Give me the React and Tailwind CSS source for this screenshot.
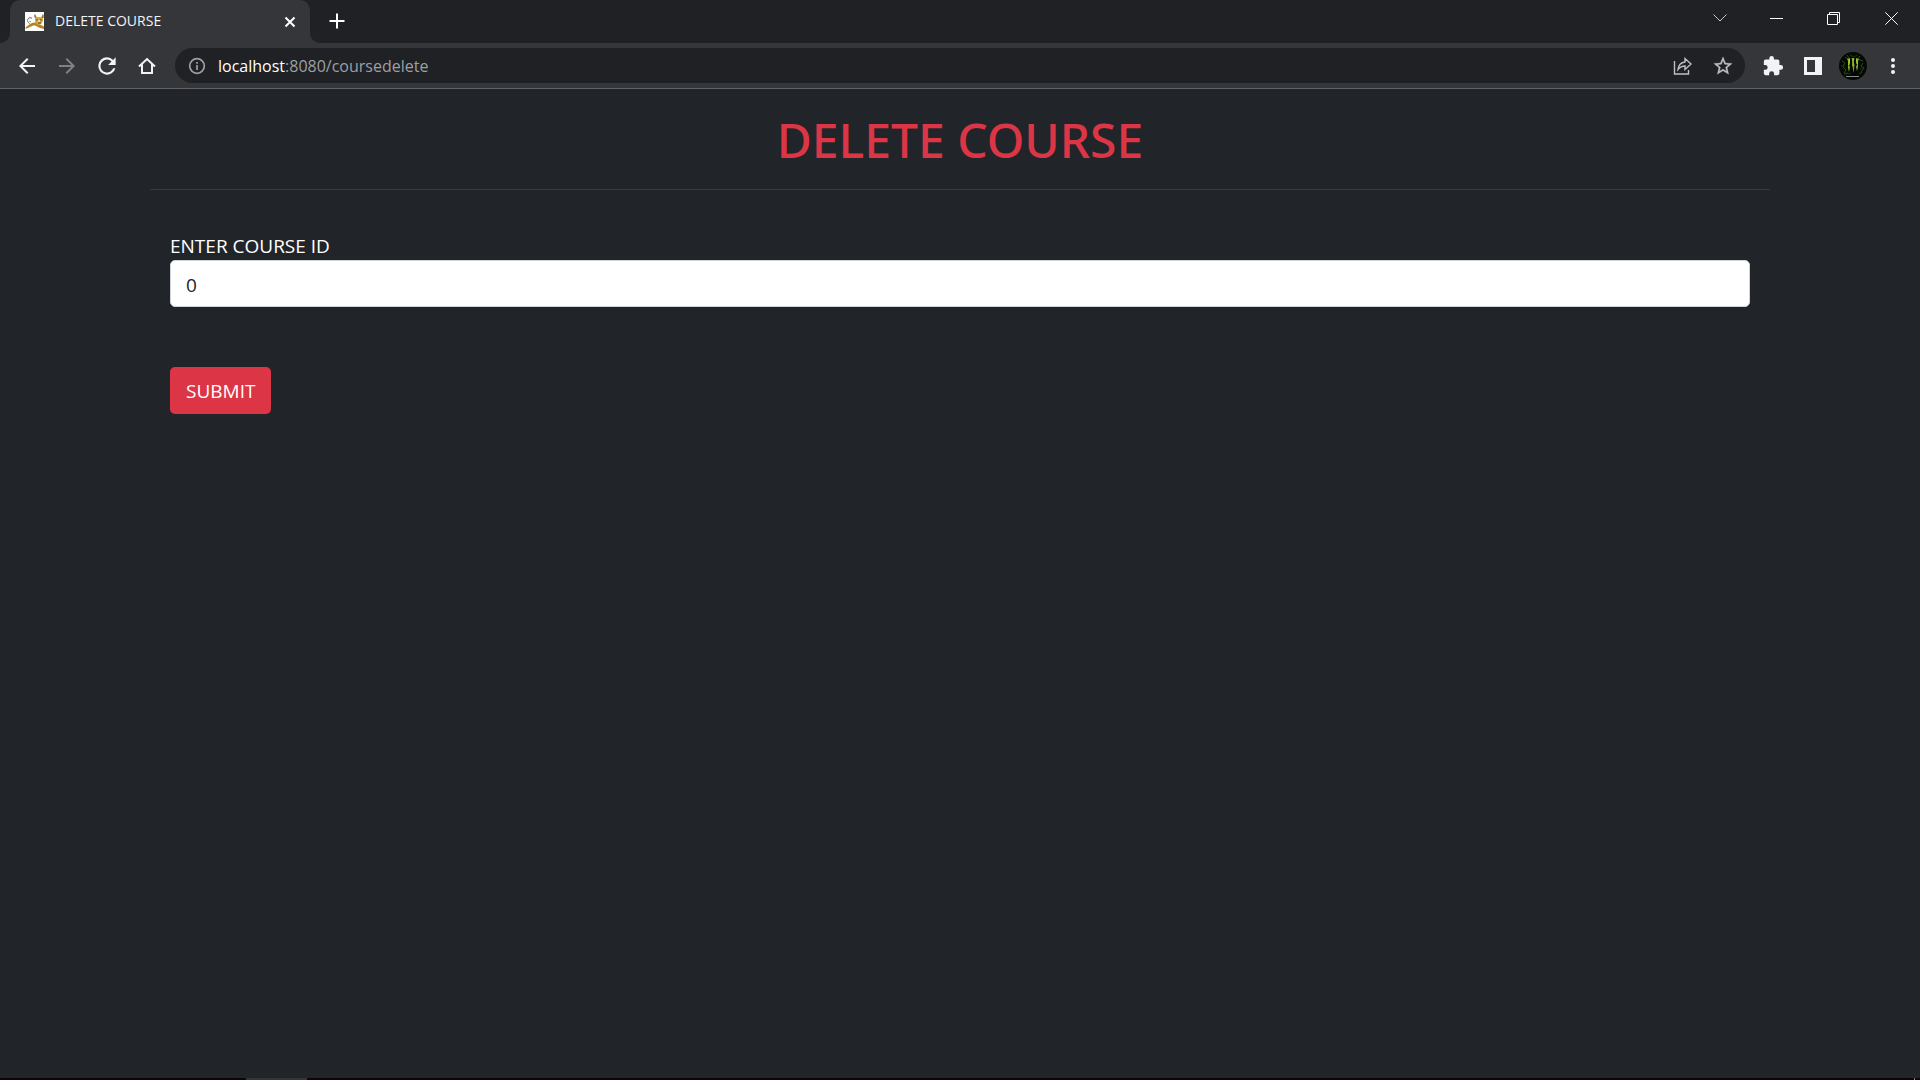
import React, { useState } from "react";

const stroke = { fill: "none", stroke: "currentColor" };

function Favicon() {
  return (
    <svg viewBox="0 0 19 19" className="size-[19px] shrink-0" aria-hidden="true">
      <rect width="19" height="19" fill="#fff" />
      <path d="M7 6C5 5 2.500 6 2.500 8.500c0 2 2 3 3 4" fill="none" stroke="#777" />
      <path d="M4 5l2.500 1.500M4 9l2 1" stroke="#999" fill="none" />
      <path d="M0 16.500c1-2 4-4 6-5 2-1 4-1.500 6-.500l3 1.500 4 2v2.500l-4-1-4-2c-2-1-3 0-5 .500l-4 2z" fill="#b9821e" />
      <path d="M10 3l2 2h4l2-2v6l-2 3-3 1-3-3z" fill="#d3a748" />
      <path d="M10 2.500V5.500M18 2.500V6M12 7v1.500M16 7v1.500M13 11h3" stroke="#5c4012" fill="none" />
      <path d="M13 8h2v2h-2z" fill="#f0dc9c" />
    </svg>
  );
}

function Avatar() {
  return (
    <svg viewBox="0 0 28 28" className="size-7" aria-hidden="true">
      <circle cx="14" cy="14" r="14" fill="#050904" />
      <g fill="none" stroke="#2c4c10">
        <path d="M3 9l3 2-2 4 3 3-2 3M6 5l3 2M8 3l2 3M21 4l-2 3 5 2M24 11l-2 3 3 2-3 4M5 22l4-1M20 22l3-2" />
        <path d="M11 3l4 2 3-2M2 14l3-1M21 17l2-1M9 22l3-1" stroke="#1e360b" />
      </g>
      <path d="M8 7l3-1v5l-1 2 1 2-1 5-1-4V9zM12.500 6h3l-1 4 1 3-1 8-1-7V9zM17 6l3 1-1 2v6l-1 4-1-4 1-3-1-2z" fill="#7fae18" />
      <path d="M10 7v6M14 7v7M18 7v5" stroke="#b4dc28" fill="none" />
      <path d="M7 24.500h13" stroke="#8a8a8a" />
    </svg>
  );
}

function BrowserTabs() {
  return (
    <div className="flex h-[43px] items-start bg-[#202124]">
      <svg viewBox="0 0 10 10" className="size-[10px] self-end" aria-hidden="true">
        <path d="M10 0v10H0A10 10 0 0 0 10 0z" fill="#35363a" />
      </svg>
      <div className="flex h-full w-[300px] items-center rounded-t-[10px] bg-[#35363a] pl-[15px] pr-[10px]">
        <Favicon />
        <span className="ml-[11px] flex-1 truncate pb-0.5 text-[14px] leading-5 text-[#f1f3f4]">DELETE COURSE</span>
        <button type="button" aria-label="Close tab" className="flex size-5 items-center justify-center text-white">
          <svg viewBox="0 0 12 12" className="size-3" strokeWidth="2" {...stroke}>
            <path d="M1.500 1.500l9 9M10.500 1.500l-9 9" />
          </svg>
        </button>
      </div>
      <svg viewBox="0 0 10 10" className="size-[10px] self-end" aria-hidden="true">
        <path d="M0 0v10h10A10 10 0 0 1 0 0z" fill="#35363a" />
      </svg>
      <button type="button" aria-label="New tab" className="flex h-[42px] w-[34px] items-center justify-center text-white">
        <svg viewBox="0 0 16 16" className="size-4" strokeWidth="2" {...stroke}>
          <path d="M8 .500v15M.500 8h15" />
        </svg>
      </button>
      <div className="ml-auto flex h-9 text-white">
        <button type="button" aria-label="Search tabs" className="flex w-[57px] items-center justify-center text-[#c4c6c9]">
          <svg viewBox="0 0 14 8" className="h-2 w-[14px]" {...stroke}>
            <path d="M.500.500L7 7l6.500-6.500" />
          </svg>
        </button>
        <button type="button" aria-label="Minimize" className="flex w-[57px] items-center justify-center">
          <svg viewBox="0 0 13 13" className="size-[13px]" {...stroke}>
            <path d="M0 6.500h13" />
          </svg>
        </button>
        <button type="button" aria-label="Restore" className="flex w-[57px] items-center justify-center">
          <svg viewBox="0 0 13 13" className="size-[13px]" {...stroke}>
            <path d="M.500 2.500h10v10H.500zM2.500 2.500v-2h10v10h-2" />
          </svg>
        </button>
        <button type="button" aria-label="Close" className="flex w-[58px] items-center justify-center">
          <svg viewBox="0 0 13 13" className="size-[13px]" {...stroke}>
            <path d="M.300.300l12.400 12.400M12.700.300L.300 12.700" />
          </svg>
        </button>
      </div>
    </div>
  );
}

function ToolButton({ label, className = "text-[#f1f3f4]", children }) {
  return (
    <button type="button" aria-label={label} className={`flex h-9 w-10 shrink-0 items-center justify-center ${className}`}>
      {children}
    </button>
  );
}

function Toolbar() {
  return (
    <div className="flex h-[46px] items-center border-b border-[#5f6368] bg-[#35363a] px-[7px]">
      <ToolButton label="Back">
        <svg viewBox="0 0 24 24" className="size-6" fill="currentColor">
          <path d="M20 11H7.830l5.590-5.590L12 4l-8 8 8 8 1.410-1.410L7.830 13H20z" />
        </svg>
      </ToolButton>
      <ToolButton label="Forward" className="text-[#808184]">
        <svg viewBox="0 0 24 24" className="size-6" fill="currentColor">
          <path d="M4 13h12.170l-5.590 5.590L12 20l8-8-8-8-1.410 1.410L16.170 11H4z" />
        </svg>
      </ToolButton>
      <ToolButton label="Reload">
        <svg viewBox="0 0 24 24" className="size-[26px]" fill="currentColor">
          <path d="M17.650 6.350A7.960 7.960 0 0 0 12 4a8 8 0 1 0 7.730 10h-2.080A6 6 0 1 1 12 6c1.660 0 3.140.690 4.220 1.780L13 11h7V4z" />
        </svg>
      </ToolButton>
      <ToolButton label="Home">
        <svg viewBox="0 0 18 18" className="size-[18px]" strokeWidth="2" {...stroke}>
          <path d="M1 9.500L9 2l8 7.500M4 7.500V16h10V7.500" />
        </svg>
      </ToolButton>
      <div className="ml-2 flex h-[35px] flex-1 items-center rounded-full bg-[#202124] pl-[13px] pr-[2px]">
        <svg viewBox="0 0 18 18" className="size-[18px] shrink-0 text-[#9aa0a6]" strokeWidth="1.700" {...stroke} aria-hidden="true">
          <circle cx="9" cy="9" r="7.300" />
          <path d="M9 8v5M9 5v1.700" />
        </svg>
        <span className="ml-3 flex-1 text-[16px] leading-6 text-[#9aa0a6]">
          <span className="text-white">localhost</span>:8080/coursedelete
        </span>
        <ToolButton label="Share this page" className="text-[#bdc1c6]">
          <svg viewBox="0 0 20 20" className="size-5" strokeWidth="1.400" {...stroke}>
            <path d="M1.500 5v13h14v-4" />
            <path d="M5 13.500c.500-4.500 3-7 7-7.500V2.500l6 5.500-6 5.500V10c-3 0-5 1-7 3.500z" />
          </svg>
        </ToolButton>
        <ToolButton label="Bookmark this tab" className="text-[#bdc1c6]">
          <svg viewBox="0 0 24 24" className="size-[22px]" fill="currentColor" stroke="currentColor" strokeWidth="0.300">
            <path d="M22 9.240l-7.190-.620L12 2 9.190 8.630 2 9.240l5.460 4.730L5.820 21 12 17.270 18.180 21l-1.630-7.030zM12 15.400l-3.760 2.270 1-4.280-3.320-2.880 4.380-.380L12 6.100l1.710 4.040 4.380.380-3.320 2.880 1 4.280z" />
          </svg>
        </ToolButton>
      </div>
      <div className="ml-2 flex">
        <ToolButton label="Extensions">
          <svg viewBox="0 0 24 24" className="size-[22px]" fill="currentColor">
            <path d="M20.500 11H19V7a2 2 0 0 0-2-2h-4V3.500a2.500 2.500 0 0 0-5 0V5H4a2 2 0 0 0-2 2v3.800h1.500a2.700 2.700 0 0 1 0 5.400H2V20c0 1.100.900 2 2 2h3.800v-1.500a2.700 2.700 0 0 1 5.400 0V22H17a2 2 0 0 0 2-2v-4h1.500a2.500 2.500 0 0 0 0-5z" />
          </svg>
        </ToolButton>
        <ToolButton label="Side panel">
          <svg viewBox="0 0 18 18" className="size-[18px]">
            <path d="M0 0h18v18H0zM3 3v12h8V3z" fill="currentColor" fillRule="evenodd" />
          </svg>
        </ToolButton>
        <ToolButton label="Profile">
          <Avatar />
        </ToolButton>
        <ToolButton label="Browser menu">
          <svg viewBox="0 0 4 16" className="h-4 w-1" fill="currentColor">
            <circle cx="2" cy="2" r="2" />
            <circle cx="2" cy="8" r="2" />
            <circle cx="2" cy="14" r="2" />
          </svg>
        </ToolButton>
      </div>
    </div>
  );
}

export default function App() {
  const [courseId, setCourseId] = useState("0");
  return (
    <div className="flex min-h-screen flex-col bg-[#212529] font-['Open_Sans','Noto_Sans',sans-serif]">
      <header>
        <BrowserTabs />
        <Toolbar />
      </header>
      <main className="mx-auto w-full max-w-[1650px] flex-1 px-[15px]">
        <h1 className="pt-[21px] text-center font-['Noto_Sans','Open_Sans',sans-serif] text-[48px] font-medium leading-[60px] text-[#dc3545]">
          DELETE COURSE
        </h1>
        <hr className="mt-[19px] border-t border-[#dc3545]/30" />
        <form className="px-5 pt-[43px]" onSubmit={(e) => e.preventDefault()}>
          <label htmlFor="course-id" className="block text-[19px] leading-[27px] text-white">
            ENTER COURSE ID
          </label>
          <input
            id="course-id"
            type="text"
            value={courseId}
            onChange={(e) => setCourseId(e.target.value)}
            className="block h-[47px] w-full rounded-[5px] border border-[#ced4da] bg-white px-[15px] pt-0.5 text-[19px] leading-[27px] text-[#212529]"
          />
          <button type="submit" className="mt-[60px] h-[47px] rounded-[5px] bg-[#dc3545] px-4 pt-0.5 text-[19px] leading-[27px] text-white">
            SUBMIT
          </button>
        </form>
      </main>
      <footer className="flex h-[2px] bg-[#0d0609]">
        <div className="ml-[246px] w-[61px] bg-[#363435]" />
        <div className="ml-auto mr-[5px] w-px bg-[#8a8a8a]" />
      </footer>
    </div>
  );
}
